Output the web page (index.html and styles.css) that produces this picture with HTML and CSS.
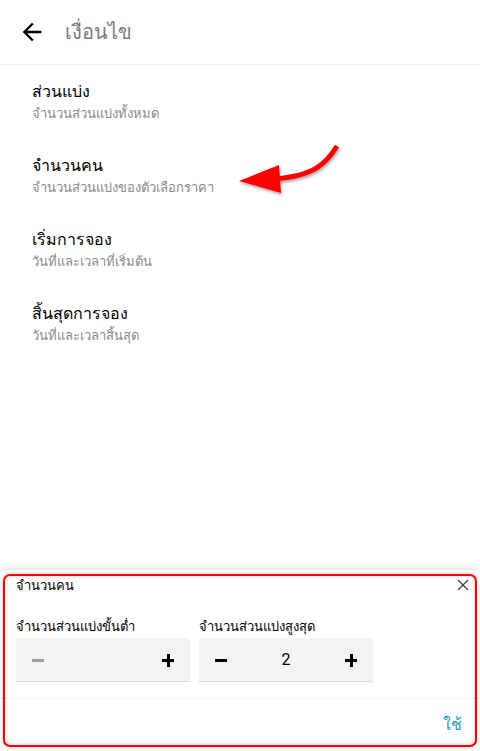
FILE: index.html
```html
<!DOCTYPE html>
<html lang="th">
<head>
<meta charset="utf-8">
<link rel="stylesheet" href="styles.css">
</head>
<body>
<div class="page">
  <header class="header">
    <svg class="back" width="28" height="28" viewBox="0 0 24 24"><path d="M20 11H7.83l5.59-5.59L12 4l-8 8 8 8 1.41-1.41L7.83 13H20v-2z" fill="#000"/></svg>
    <span class="title">เงื่อนไข</span>
  </header>
  <ul class="list">
    <li class="item"><div class="item-title">ส่วนแบ่ง</div><div class="item-sub">จำนวนส่วนแบ่งทั้งหมด</div></li>
    <li class="item"><div class="item-title">จำนวนคน</div><div class="item-sub">จำนวนส่วนแบ่งของตัวเลือกราคา</div></li>
    <li class="item"><div class="item-title">เริ่มการจอง</div><div class="item-sub">วันที่และเวลาที่เริ่มต้น</div></li>
    <li class="item"><div class="item-title">สิ้นสุดการจอง</div><div class="item-sub">วันที่และเวลาสิ้นสุด</div></li>
  </ul>
  <svg class="pointer" width="120" height="70" viewBox="230 135 120 70">
    <defs><filter id="sh" x="-20%" y="-20%" width="140%" height="140%"><feDropShadow dx="1" dy="2" stdDeviation="1.5" flood-color="#000" flood-opacity="0.35"/></filter></defs>
    <g filter="url(#sh)">
      <path d="M337 146 C 326 164, 314 176, 274 179" fill="none" stroke="#ff0000" stroke-width="5"/>
      <path d="M239 181 L279 165 L281 193 Z" fill="#ff0000"/>
    </g>
  </svg>
  <section class="sheet">
    <div class="sheet-head">
      <span class="sheet-title">จำนวนคน</span>
      <svg class="close" width="12" height="12" viewBox="0 0 12 12"><path d="M1 1L11 11M11 1L1 11" stroke="#444" stroke-width="1.4"/></svg>
    </div>
    <div class="steppers">
      <div class="field">
        <div class="label">จำนวนส่วนแบ่งขั้นต่ำ</div>
        <div class="stepper">
          <span class="btn minus disabled"></span>
          <span class="value"></span>
          <span class="btn plus"></span>
        </div>
      </div>
      <div class="field">
        <div class="label">จำนวนส่วนแบ่งสูงสุด</div>
        <div class="stepper">
          <span class="btn minus"></span>
          <span class="value">2</span>
          <span class="btn plus"></span>
        </div>
      </div>
    </div>
    <div class="sheet-foot"><span class="apply">ใช้</span></div>
    <div class="mark"></div>
  </section>
</div>
</body>
</html>
```
FILE: styles.css
```css
* { box-sizing: border-box; }
html, body { margin: 0; padding: 0; }
body {
  width: 480px;
  height: 751px;
  overflow: hidden;
  background: #fff;
  font-family: Roboto, "Noto Sans", sans-serif;
  color: #000;
}
.page {
  position: relative;
  width: 480px;
  height: 751px;
  display: flex;
  flex-direction: column;
}
.header {
  height: 65px;
  border-bottom: 1px solid #efefef;
  display: flex;
  align-items: center;
  padding-left: 18px;
}
.back { width: 28px; height: 28px; }
.title {
  margin-left: 19px;
  font-size: 20px;
  color: #7a7a7a;
}
.list {
  list-style: none;
  margin: 0;
  padding: 16px 0 0 32px;
  display: flex;
  flex-direction: column;
  gap: 30px;
}
.item-title {
  font-size: 16px;
  font-weight: 500;
  line-height: 22px;
}
.item-sub {
  font-size: 13px;
  color: #8a8a8a;
  line-height: 22px;
}
.pointer {
  position: absolute;
  left: 230px;
  top: 135px;
}
.sheet {
  margin-top: auto;
  position: relative;
  height: 181px;
  background: #fff;
  box-shadow: 0 -2px 8px rgba(0,0,0,0.12);
  border-radius: 6px 6px 0 0;
  display: flex;
  flex-direction: column;
}
.sheet-head {
  display: flex;
  justify-content: space-between;
  align-items: center;
  padding: 6px 11px 0 16px;
  height: 24px;
}
.sheet-title { font-size: 13px; }
.steppers {
  display: flex;
  gap: 9px;
  padding: 23px 16px 0;
}
.field { width: 174px; }
.label {
  font-size: 13px;
  line-height: 20px;
  margin-bottom: 1px;
}
.stepper {
  height: 44px;
  background: #f3f3f3;
  border-bottom: 1px solid #d8d8d8;
  border-radius: 4px 4px 0 0;
  display: flex;
  align-items: center;
  justify-content: space-between;
  padding: 0 16px 0 16px;
}
.value { font-size: 16px; }
.btn { position: relative; width: 12px; height: 12px; }
.btn::before {
  content: "";
  position: absolute;
  left: 0; top: 5px;
  width: 12px; height: 3px;
  background: #000;
}
.plus::after {
  content: "";
  position: absolute;
  left: 4.5px; top: 0;
  width: 3px; height: 13px;
  background: #000;
}
.minus.disabled::before { background: #9e9e9e; }
.sheet-foot {
  margin-top: 16px;
  border-top: 1px solid #eeeeee;
  flex: 1;
  display: flex;
  justify-content: flex-end;
  align-items: center;
  padding-right: 18px;
  padding-bottom: 2px;
}
.apply {
  font-size: 16px;
  color: #1f9fbf;
  font-weight: 500;
}
.mark {
  position: absolute;
  left: 3px; top: 4px; right: 3px; bottom: 4px;
  border: 2px solid #ff0000;
  border-radius: 7px;
  box-shadow: 0 0 4px rgba(0,0,0,0.25), inset 0 0 4px rgba(0,0,0,0.18);
  pointer-events: none;
}
```
